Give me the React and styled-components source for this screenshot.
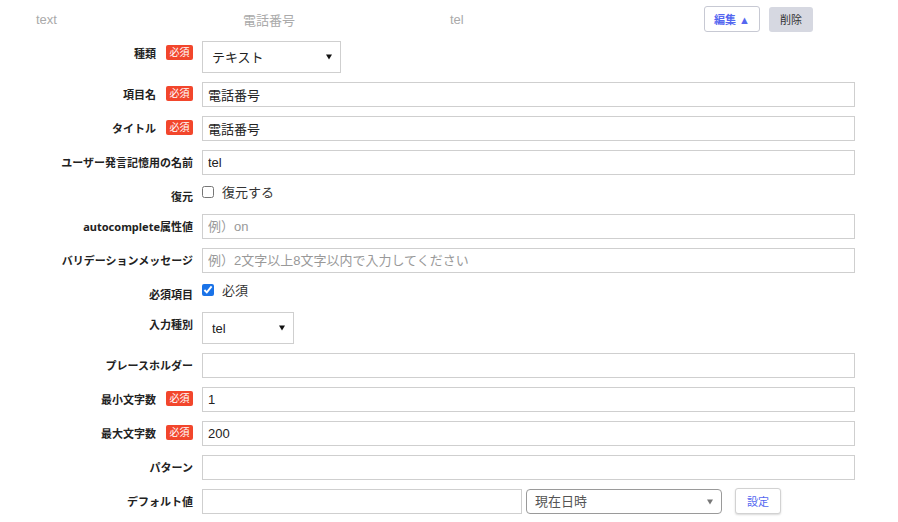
import React from "react";
import styled, { createGlobalStyle } from "styled-components";

const GlobalStyle = createGlobalStyle`
  body {
    margin: 0;
    background: #fff;
    font-family: "Liberation Sans", "Noto Sans CJK JP", sans-serif;
    color: #333;
  }
`;

const Page = styled.div`
  width: 898px;
  height: 522px;
  overflow: hidden;
`;

const Header = styled.div`
  display: flex;
  align-items: center;
  height: 26px;
  padding: 6px 0 0 36px;
`;

const HeaderCell = styled.div`
  width: ${(p) => p.w}px;
  font-size: 13px;
  color: #aaa;
`;

const EditButton = styled.button`
  height: 26px;
  width: 56px;
  margin-left: 11px;
  padding: 0;
  border: 1px solid #c7c9d3;
  border-radius: 3px;
  background: #fff;
  color: #5567f0;
  font-family: inherit;
  font-size: 11px;
  font-weight: bold;
`;

const DeleteButton = styled.button`
  height: 25px;
  width: 44px;
  margin-left: 9px;
  padding: 0;
  border: none;
  border-radius: 3px;
  background: #d6d8e1;
  color: #333;
  font-family: inherit;
  font-size: 11px;
`;

const Form = styled.div`
  display: flex;
  flex-direction: column;
  gap: 9px;
  padding-top: 9px;
`;

const Row = styled.div`
  display: flex;
  align-items: flex-start;
  height: ${(p) => (p.h ? `${p.h}px` : "auto")};
`;

const LabelCell = styled.div`
  width: 193px;
  flex-shrink: 0;
  display: flex;
  justify-content: flex-end;
  align-items: center;
  gap: 10px;
  height: 24px;
  margin-right: 9px;
`;

const Label = styled.span`
  font-family: "Noto Sans", "Noto Sans CJK JP", sans-serif;
  font-size: 11px;
  font-weight: bold;
  color: #222;
  white-space: nowrap;
`;

const Badge = styled.span`
  display: inline-block;
  width: 27px;
  height: 15px;
  line-height: 15px;
  text-align: center;
  background: #f2462c;
  color: #fff;
  font-size: 10px;
  border-radius: 2px;
  margin-top: -1px;
`;

const TextInput = styled.input`
  box-sizing: border-box;
  width: ${(p) => p.w || 653}px;
  height: 25px;
  margin: 0;
  padding: 0 5px;
  border: 1px solid #cfcfcf;
  border-radius: 0;
  font-family: inherit;
  font-size: 13px;
  color: #222;
  outline: none;
  &::placeholder {
    color: #999;
  }
`;

const SelectWrap = styled.div`
  position: relative;
  margin-left: ${(p) => p.ml || 0}px;
`;

const Select = styled.select`
  box-sizing: border-box;
  appearance: none;
  width: ${(p) => p.w}px;
  height: ${(p) => p.h}px;
  margin: 0;
  padding: 0 0 0 ${(p) => (p.rounded ? 8 : 9)}px;
  border: 1px solid ${(p) => (p.rounded ? "#9a9a9a" : "#cfcfcf")};
  border-radius: ${(p) => (p.rounded ? 4 : 0)}px;
  background: #fff;
  font-family: inherit;
  font-size: 13px;
  color: ${(p) => (p.rounded ? "#555" : "#222")};
  outline: none;
`;

const Arrow = styled.span`
  position: absolute;
  right: ${(p) => p.r}px;
  top: 50%;
  transform: translateY(-50%);
  width: 0;
  height: 0;
  border-left: 3px solid transparent;
  border-right: 3px solid transparent;
  border-top: 5px solid ${(p) => p.c || "#111"};
  pointer-events: none;
`;

const CheckLine = styled.label`
  display: flex;
  align-items: flex-start;
  gap: 8px;
  font-size: 13px;
  color: #333;
`;

const Checkbox = styled.input`
  width: 12px;
  height: 12px;
  margin: 2px 0 0 0;
  accent-color: #1a73e8;
`;

const CheckText = styled.span`
  line-height: 17px;
`;

const SetButton = styled.button`
  height: 26px;
  width: 46px;
  margin: -1px 0 0 13px;
  padding: 0;
  border: 1px solid #d2d2d2;
  border-radius: 3px;
  background: #fff;
  box-shadow: 0 1px 2px rgba(0, 0, 0, 0.15);
  color: #5567f0;
  font-family: inherit;
  font-size: 11px;
`;

const Field = ({ label, required, children, h }) => (
  <Row h={h}>
    <LabelCell>
      <Label>{label}</Label>
      {required && <Badge>必須</Badge>}
    </LabelCell>
    {children}
  </Row>
);

export default function App() {
  return (
    <Page>
      <GlobalStyle />
      <Header>
        <HeaderCell w={207}>text</HeaderCell>
        <HeaderCell w={207}>電話番号</HeaderCell>
        <HeaderCell w={243}>tel</HeaderCell>
        <EditButton>編集 ▲</EditButton>
        <DeleteButton>削除</DeleteButton>
      </Header>
      <Form>
        <Field label="種類" required>
          <SelectWrap>
            <Select w={139} h={32} defaultValue="text">
              <option value="text">テキスト</option>
            </Select>
            <Arrow r={9} />
          </SelectWrap>
        </Field>
        <Field label="項目名" required>
          <TextInput defaultValue="電話番号" />
        </Field>
        <Field label="タイトル" required>
          <TextInput defaultValue="電話番号" />
        </Field>
        <Field label="ユーザー発言記憶用の名前">
          <TextInput defaultValue="tel" />
        </Field>
        <Field label="復元" h={21}>
          <CheckLine>
            <Checkbox type="checkbox" />
            <CheckText>復元する</CheckText>
          </CheckLine>
        </Field>
        <Field label="autocomplete属性値">
          <TextInput placeholder="例）on" />
        </Field>
        <Field label="バリデーションメッセージ">
          <TextInput placeholder="例）2文字以上8文字以内で入力してください" />
        </Field>
        <Field label="必須項目" h={21}>
          <CheckLine>
            <Checkbox type="checkbox" defaultChecked />
            <CheckText>必須</CheckText>
          </CheckLine>
        </Field>
        <Field label="入力種別">
          <SelectWrap>
            <Select w={92} h={32} defaultValue="tel">
              <option value="tel">tel</option>
            </Select>
            <Arrow r={9} />
          </SelectWrap>
        </Field>
        <Field label="プレースホルダー">
          <TextInput />
        </Field>
        <Field label="最小文字数" required>
          <TextInput defaultValue="1" />
        </Field>
        <Field label="最大文字数" required>
          <TextInput defaultValue="200" />
        </Field>
        <Field label="パターン">
          <TextInput />
        </Field>
        <Field label="デフォルト値">
          <TextInput w={320} />
          <SelectWrap ml={4}>
            <Select w={196} h={25} rounded defaultValue="now">
              <option value="now">現在日時</option>
            </Select>
            <Arrow r={9} c="#777" />
          </SelectWrap>
          <SetButton>設定</SetButton>
        </Field>
      </Form>
    </Page>
  );
}
